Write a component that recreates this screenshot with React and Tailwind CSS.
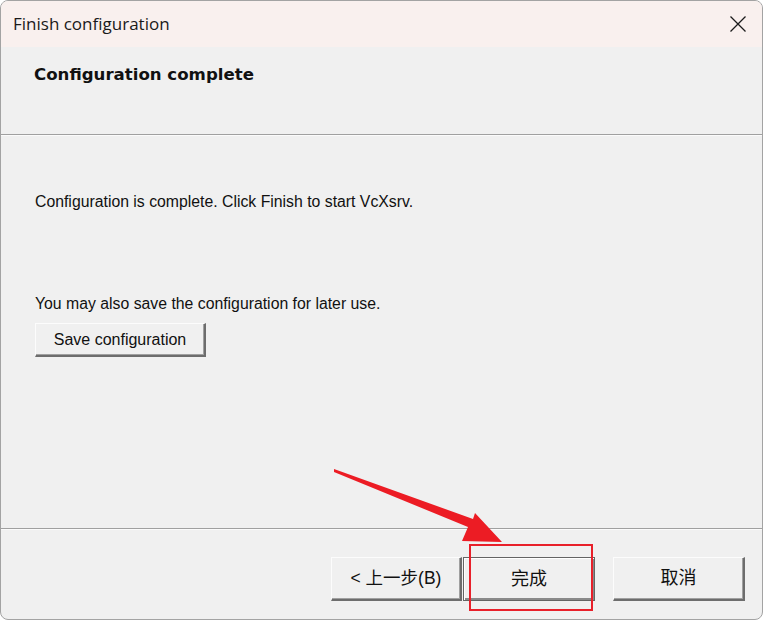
import React from 'react';

const sans = { fontFamily: '"Liberation Sans", "Noto Sans CJK SC", sans-serif' };

function WinButton({ children, isDefault = false, className = '' }) {
  return (
    <div
      className={
        'flex items-center justify-center bg-[#f0f0f0] text-[#111] ' +
        (isDefault
          ? 'border border-[#646464] shadow-[inset_1px_1px_0_#fff,inset_-2px_-2px_0_#8a8a8a] '
          : 'border-t border-l border-t-[#fcfcfc] border-l-[#fcfcfc] border-r-2 border-b-2 border-r-[#6d6d6d] border-b-[#6d6d6d] shadow-[inset_-1px_-1px_0_#a0a0a0] ') +
        className
      }
    >
      {children}
    </div>
  );
}

export default function App() {
  return (
    <div className="w-[764px] h-[621px] bg-white" style={sans}>
      <div className="relative w-[763px] h-[620px] flex flex-col overflow-hidden rounded-[8px] border border-[#a3a3a3] bg-[#f0f0f0]">
        {/* Title bar */}
        <div className="h-[46px] shrink-0 flex items-center justify-between bg-[#f9f0ee] pl-[12px] pr-[15px]">
          <span className="text-[17px] text-[#1a1a1a] leading-none pb-[1px]" style={{ fontFamily: '"Open Sans", "Noto Sans", sans-serif' }}>
            Finish configuration
          </span>
          <svg width="18" height="18" viewBox="0 0 18 18" className="mb-[1px]">
            <path d="M1.5 1.5 L16.5 16.5 M16.5 1.5 L1.5 16.5" stroke="#1b1b1b" strokeWidth="1.3" fill="none" />
          </svg>
        </div>

        {/* Header */}
        <div className="h-[87px] shrink-0 pl-[33px] pt-[16px]">
          <h1 className="text-[16.6px] font-bold text-[#111]" style={{ fontFamily: '"DejaVu Sans", sans-serif' }}>
            Configuration complete
          </h1>
        </div>
        <div className="h-[2px] shrink-0 border-t border-[#a0a0a0] border-b border-b-[#fbfbfb]" />

        {/* Content */}
        <div className="flex-1 flex flex-col pl-[34px] pt-[57px]">
          <p className="text-[15.8px] leading-[18px] text-[#111]">
            Configuration is complete. Click Finish to start VcXsrv.
          </p>
          <p className="mt-[84px] text-[15.8px] leading-[18px] text-[#111]">
            You may also save the configuration for later use.
          </p>
          <WinButton className="mt-[10px] w-[171px] h-[34px] text-[16px]">Save configuration</WinButton>
        </div>

        <div className="h-[2px] shrink-0 border-t border-[#a0a0a0] border-b border-b-[#fbfbfb]" />

        {/* Buttons */}
        <div className="h-[89px] shrink-0 flex items-start pl-[330px] pt-[27px]">
          <WinButton className="w-[131px] h-[44px] text-[17.5px]">&lt; 上一步(B)</WinButton>
          <WinButton isDefault className="ml-[1px] w-[132px] h-[44px] text-[18px]">完成</WinButton>
          <WinButton className="ml-[18px] w-[132px] h-[44px] text-[18px]">取消</WinButton>
        </div>

        {/* Annotation overlay */}
        <div className="absolute left-[468px] top-[543px] w-[124px] h-[67px] border-2 border-[#e8202a]" />
        <svg className="absolute left-0 top-0 pointer-events-none" width="764" height="621">
          <polygon
            points="333,468 472,518 474,512 501,541 461,540 467,526 333,471"
            fill="#ec1c24"
          />
        </svg>
      </div>
    </div>
  );
}
